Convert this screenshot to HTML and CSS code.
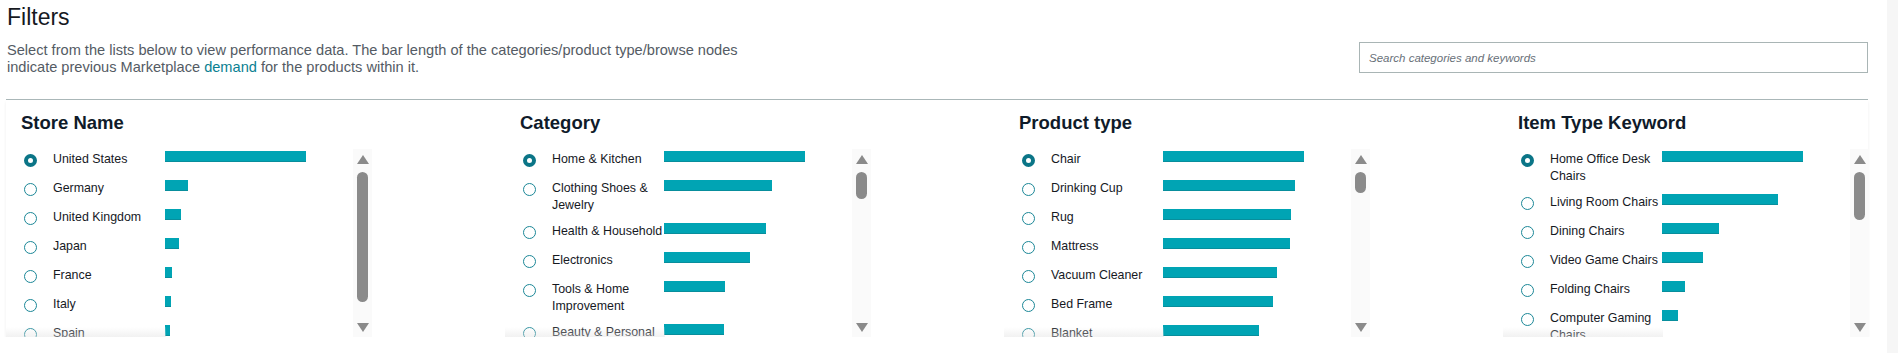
FILE: index.html
```html
<!DOCTYPE html>
<html>

<head>
    <title>Filters</title>
    <link rel="stylesheet" href="styles.css">
</head>

<body>
    <div class="page">
        <div class="header">
            <div class="intro">
                <h1 class="title">Filters</h1>
                <p class="desc">Select from the lists below to view performance data. The bar length of the categories/product type/browse nodes<br>indicate previous Marketplace <a href="#">demand</a> for the products within it.</p>
            </div>
            <input type="text" class="search" placeholder="Search categories and keywords">
        </div>

        <div class="panel">
            <div class="column">
                <h2 class="col-title">Store Name</h2>
                <div class="list">
                    <div class="rows">
                        <div class="row"><span class="radio checked"></span><span class="label">United States</span><span class="bar" style="width:141px"></span></div>
                        <div class="row"><span class="radio"></span><span class="label">Germany</span><span class="bar" style="width:23px"></span></div>
                        <div class="row"><span class="radio"></span><span class="label">United Kingdom</span><span class="bar" style="width:16px"></span></div>
                        <div class="row"><span class="radio"></span><span class="label">Japan</span><span class="bar" style="width:14px"></span></div>
                        <div class="row"><span class="radio"></span><span class="label">France</span><span class="bar" style="width:7px"></span></div>
                        <div class="row"><span class="radio"></span><span class="label">Italy</span><span class="bar" style="width:6px"></span></div>
                        <div class="row"><span class="radio"></span><span class="label">Spain</span><span class="bar" style="width:5px"></span></div>
                        <div class="row"><span class="radio"></span><span class="label">Canada</span><span class="bar" style="width:4px"></span></div>
                    </div>
                    <div class="scroll"><span class="arrow up"></span><span class="thumb" style="height:130px"></span><span class="arrow down"></span></div>
                </div>
            </div>

            <div class="column">
                <h2 class="col-title">Category</h2>
                <div class="list">
                    <div class="rows">
                        <div class="row"><span class="radio checked"></span><span class="label">Home &amp; Kitchen</span><span class="bar" style="width:141px"></span></div>
                        <div class="row"><span class="radio"></span><span class="label">Clothing Shoes &amp; Jewelry</span><span class="bar" style="width:108px"></span></div>
                        <div class="row"><span class="radio"></span><span class="label nowrap">Health &amp; Household</span><span class="bar" style="width:102px"></span></div>
                        <div class="row"><span class="radio"></span><span class="label">Electronics</span><span class="bar" style="width:86px"></span></div>
                        <div class="row"><span class="radio"></span><span class="label">Tools &amp; Home Improvement</span><span class="bar" style="width:61px"></span></div>
                        <div class="row"><span class="radio"></span><span class="label">Beauty &amp; Personal Care</span><span class="bar" style="width:60px"></span></div>
                    </div>
                    <div class="scroll"><span class="arrow up"></span><span class="thumb" style="height:27px"></span><span class="arrow down"></span></div>
                </div>
            </div>

            <div class="column">
                <h2 class="col-title">Product type</h2>
                <div class="list">
                    <div class="rows">
                        <div class="row"><span class="radio checked"></span><span class="label">Chair</span><span class="bar" style="width:141px"></span></div>
                        <div class="row"><span class="radio"></span><span class="label">Drinking Cup</span><span class="bar" style="width:132px"></span></div>
                        <div class="row"><span class="radio"></span><span class="label">Rug</span><span class="bar" style="width:128px"></span></div>
                        <div class="row"><span class="radio"></span><span class="label">Mattress</span><span class="bar" style="width:127px"></span></div>
                        <div class="row"><span class="radio"></span><span class="label">Vacuum Cleaner</span><span class="bar" style="width:114px"></span></div>
                        <div class="row"><span class="radio"></span><span class="label">Bed Frame</span><span class="bar" style="width:110px"></span></div>
                        <div class="row"><span class="radio"></span><span class="label">Blanket</span><span class="bar" style="width:96px"></span></div>
                    </div>
                    <div class="scroll"><span class="arrow up"></span><span class="thumb" style="height:21px"></span><span class="arrow down"></span></div>
                </div>
            </div>

            <div class="column">
                <h2 class="col-title">Item Type Keyword</h2>
                <div class="list">
                    <div class="rows">
                        <div class="row"><span class="radio checked"></span><span class="label">Home Office Desk Chairs</span><span class="bar" style="width:141px"></span></div>
                        <div class="row"><span class="radio"></span><span class="label">Living Room Chairs</span><span class="bar" style="width:116px"></span></div>
                        <div class="row"><span class="radio"></span><span class="label">Dining Chairs</span><span class="bar" style="width:57px"></span></div>
                        <div class="row"><span class="radio"></span><span class="label">Video Game Chairs</span><span class="bar" style="width:41px"></span></div>
                        <div class="row"><span class="radio"></span><span class="label">Folding Chairs</span><span class="bar" style="width:23px"></span></div>
                        <div class="row"><span class="radio"></span><span class="label">Computer Gaming Chairs</span><span class="bar" style="width:16px"></span></div>
                    </div>
                    <div class="scroll"><span class="arrow up"></span><span class="thumb" style="height:48px"></span><span class="arrow down"></span></div>
                </div>
            </div>
        </div>
    </div>
</body>

</html>
```

FILE: styles.css
```css
body {
    margin: 0;
    font-family: "Liberation Sans", Arial, sans-serif;
    color: #16191f;
    background: linear-gradient(to right, #fff 1887px, #f6f6f6 1887px);
}

.page {
    width: 1862px;
    margin-left: 6px;
}

.header {
    display: flex;
    justify-content: space-between;
    align-items: flex-start;
    height: 99px;
    border-bottom: 1px solid #aab7b8;
}

.title {
    margin: 4px 0 0 1px;
    font-size: 23px;
    line-height: 26px;
    font-weight: 400;
    color: #16191f;
}

.desc {
    margin: 12px 0 0 1px;
    font-size: 14.6px;
    line-height: 17px;
    color: #545b64;
}

.desc a {
    color: #0a7f92;
    text-decoration: none;
}

.search {
    margin-top: 42px;
    width: 509px;
    height: 31px;
    box-sizing: border-box;
    border: 1px solid #a9b5b5;
    padding: 0 9px;
    font-family: "Liberation Sans", Arial, sans-serif;
    font-size: 11.5px;
    font-style: italic;
    outline: none;
}

.search::placeholder {
    color: #687078;
}

.panel {
    display: grid;
    grid-template-columns: repeat(4, 366px);
    column-gap: 133px;
    box-shadow: 0 2px 3px rgba(0, 0, 0, 0.07);
}

.col-title {
    margin: 12px 0 15px 15px;
    font-size: 18.5px;
    line-height: 22px;
    font-weight: 700;
    color: #0f1b2a;
}

.list {
    position: relative;
    display: flex;
    height: 188px;
    overflow: hidden;
}

.list::after {
    content: "";
    position: absolute;
    left: 0;
    bottom: 0;
    width: 160px;
    height: 10px;
    background: linear-gradient(to bottom, rgba(255, 255, 255, 0.1), rgba(225, 225, 225, 0.45));
}

.rows {
    flex: 1;
    padding: 2px 0 0 18px;
}

.row {
    display: flex;
    align-items: flex-start;
    min-height: 20px;
    margin-bottom: 9px;
}

.radio {
    flex: none;
    width: 13px;
    height: 13px;
    box-sizing: border-box;
    margin-top: 3px;
    border: 1.5px solid #1b8797;
    border-radius: 50%;
}

.radio.checked {
    border: 4px solid #0b7587;
    background: #fff;
}

.label {
    flex: none;
    width: 112px;
    margin-left: 16px;
    font-size: 12.4px;
    line-height: 17px;
    color: #16191f;
}

.label.nowrap {
    white-space: nowrap;
}

.bar {
    flex: none;
    height: 11px;
    box-sizing: border-box;
    background: #00a4b4;
    border-bottom: 1px solid #088e9c;
}

.scroll {
    flex: none;
    width: 19px;
    display: flex;
    flex-direction: column;
    align-items: center;
    background: #fafafa;
}

.arrow {
    width: 0;
    height: 0;
    border-left: 6px solid transparent;
    border-right: 6px solid transparent;
}

.arrow.up {
    margin-top: 6px;
    border-bottom: 9px solid #8a8a8a;
}

.arrow.down {
    margin-top: auto;
    margin-bottom: 5px;
    border-top: 9px solid #8a8a8a;
}

.thumb {
    width: 11px;
    margin-top: 8px;
    border-radius: 6px;
    background: #8a8a8a;
}
```
